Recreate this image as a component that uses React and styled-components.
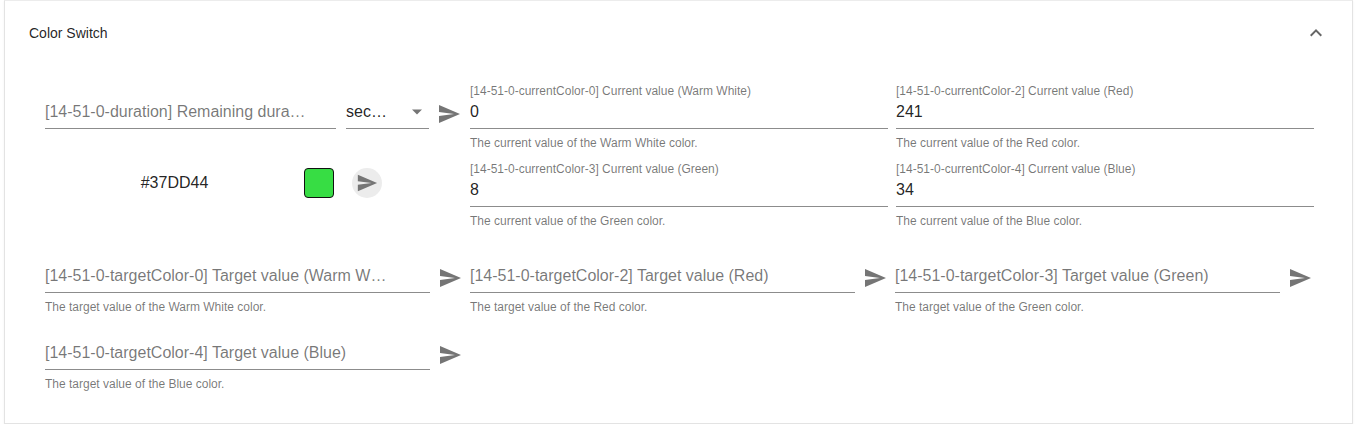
import React from 'react'
import styled, { createGlobalStyle } from 'styled-components'

const GlobalStyle = createGlobalStyle`
  body {
    margin: 0;
    background: #fff;
    font-family: "Liberation Sans", Arial, sans-serif;
  }
`

const Page = styled.div`
  padding: 0 4px;
`

const Card = styled.section`
  box-sizing: border-box;
  height: 424px;
  border: 1px solid #e3e3e3;
  border-top-color: #ececec;
  background: #fff;
  box-shadow: 0 1px 2px rgba(0, 0, 0, 0.06);
`

const Header = styled.div`
  display: flex;
  align-items: center;
  justify-content: space-between;
  height: 63px;
  padding: 0 24px;
  font-size: 14px;
  color: rgba(0, 0, 0, 0.87);
`

const Details = styled.div`
  padding: 20px 39px 0 40px;
`

const Top = styled.div`
  display: grid;
  grid-template-columns: 425px 1fr;
`

const LeftCol = styled.div`
  display: flex;
  flex-direction: column;
`

const Row = styled.div`
  display: flex;
  align-items: flex-end;
`

const CurrentGrid = styled.div`
  display: grid;
  grid-template-columns: 418px 418px;
  column-gap: 8px;
  row-gap: 12px;
`

const Field = styled.div`
  display: flex;
  flex-direction: column;
  width: ${p => (p.$width ? `${p.$width}px` : 'auto')};
  flex: ${p => (p.$width ? 'none' : '1')};
  margin-left: ${p => p.$gap || 0}px;
  min-width: 0;
`

const Label = styled.div`
  height: 14px;
  font-size: 12px;
  line-height: 14px;
  color: rgba(0, 0, 0, 0.54);
  white-space: nowrap;
`

const InputLine = styled.div`
  display: flex;
  align-items: center;
  height: 19px;
  padding: 4px 0 7px;
  line-height: 19px;
  font-size: 16px;
  color: ${p => (p.$placeholder ? 'rgba(0, 0, 0, 0.54)' : 'rgba(0, 0, 0, 0.87)')};
  border-bottom: 1px solid rgba(0, 0, 0, 0.45);
  white-space: nowrap;
  overflow: hidden;
`

const Placeholder = styled.span`
  max-width: calc(100% - ${p => p.$reserve || 0}px);
  overflow: hidden;
  text-overflow: ellipsis;
`

const SelectText = styled.span`
  width: 42px;
  overflow: hidden;
  text-overflow: ellipsis;
  flex: none;
`

const Helper = styled.div`
  margin-top: 7px;
  height: 14px;
  font-size: 12px;
  line-height: 14px;
  color: rgba(0, 0, 0, 0.54);
  white-space: nowrap;
`

const IconSlot = styled.div`
  width: 40px;
  height: 31px;
  display: flex;
  align-items: center;
  justify-content: center;
  flex: none;
  color: #757575;
`

const ColorRow = styled.div`
  display: flex;
  align-items: center;
  margin-top: 39px;
  height: 30px;
`

const Hex = styled.div`
  width: 259px;
  text-align: center;
  font-size: 16px;
  color: rgba(0, 0, 0, 0.87);
`

const Swatch = styled.div`
  box-sizing: border-box;
  width: 30px;
  height: 30px;
  border: 1px solid #111;
  border-radius: 4px;
  background: ${p => p.$color};
`

const RoundButton = styled.div`
  margin-left: 18px;
  width: 30px;
  height: 30px;
  border-radius: 50%;
  background: #ececec;
  display: flex;
  align-items: center;
  justify-content: center;
  color: #757575;
`

const TargetGrid = styled.div`
  margin-top: 20px;
  display: grid;
  grid-template-columns: repeat(3, 425px);
  row-gap: 11px;
`

const TargetCell = styled.div`
  display: flex;
  align-items: flex-start;
`

const TargetIcon = styled(IconSlot)`
  margin-top: 14px;
`

const SendIcon = ({ size = 24 }) => (
  <svg width={size} height={size} viewBox="0 0 24 24" fill="currentColor">
    <path d="M2.01 21L23 12 2.01 3 2 10l15 2-15 2z" />
  </svg>
)

const Caret = () => (
  <svg width="24" height="19" viewBox="0 2.5 24 19" fill="#757575" style={{ marginLeft: 'auto', flex: 'none' }}>
    <path d="M7 10l5 5 5-5z" />
  </svg>
)

const Chevron = () => (
  <svg width="24" height="24" viewBox="0 0 24 24" fill="#666">
    <path d="M7.41 15.41L12 10.83l4.59 4.58L18 14l-6-6-6 6z" />
  </svg>
)

const current = [
  { id: 0, name: 'Warm White', value: '0' },
  { id: 2, name: 'Red', value: '241' },
  { id: 3, name: 'Green', value: '8' },
  { id: 4, name: 'Blue', value: '34' },
]

const targets = [
  { id: 0, name: 'Warm White' },
  { id: 2, name: 'Red' },
  { id: 3, name: 'Green' },
  { id: 4, name: 'Blue' },
]

const App = () => (
  <>
    <GlobalStyle />
    <Page>
      <Card>
        <Header>
          <span>Color Switch</span>
          <Chevron />
        </Header>
        <Details>
          <Top>
            <LeftCol>
              <Row>
                <Field $width={291}>
                  <Label />
                  <InputLine $placeholder>
                    <Placeholder $reserve={30}>[14-51-0-duration] Remaining duration</Placeholder>
                  </InputLine>
                </Field>
                <Field $width={83} $gap={10}>
                  <Label />
                  <InputLine>
                    <SelectText>seconds</SelectText>
                    <Caret />
                  </InputLine>
                </Field>
                <IconSlot>
                  <SendIcon />
                </IconSlot>
              </Row>
              <ColorRow>
                <Hex>#37DD44</Hex>
                <Swatch $color="#37DD44" />
                <RoundButton>
                  <SendIcon size={22} />
                </RoundButton>
              </ColorRow>
            </LeftCol>
            <CurrentGrid>
              {current.map(c => (
                <Field key={c.id}>
                  <Label>{`[14-51-0-currentColor-${c.id}] Current value (${c.name})`}</Label>
                  <InputLine>{c.value}</InputLine>
                  <Helper>{`The current value of the ${c.name} color.`}</Helper>
                </Field>
              ))}
            </CurrentGrid>
          </Top>
          <TargetGrid>
            {targets.map(t => (
              <TargetCell key={t.id}>
                <Field>
                  <Label />
                  <InputLine $placeholder>
                    <Placeholder $reserve={37}>{`[14-51-0-targetColor-${t.id}] Target value (${t.name})`}</Placeholder>
                  </InputLine>
                  <Helper>{`The target value of the ${t.name} color.`}</Helper>
                </Field>
                <TargetIcon>
                  <SendIcon />
                </TargetIcon>
              </TargetCell>
            ))}
          </TargetGrid>
        </Details>
      </Card>
    </Page>
  </>
)

export default App
